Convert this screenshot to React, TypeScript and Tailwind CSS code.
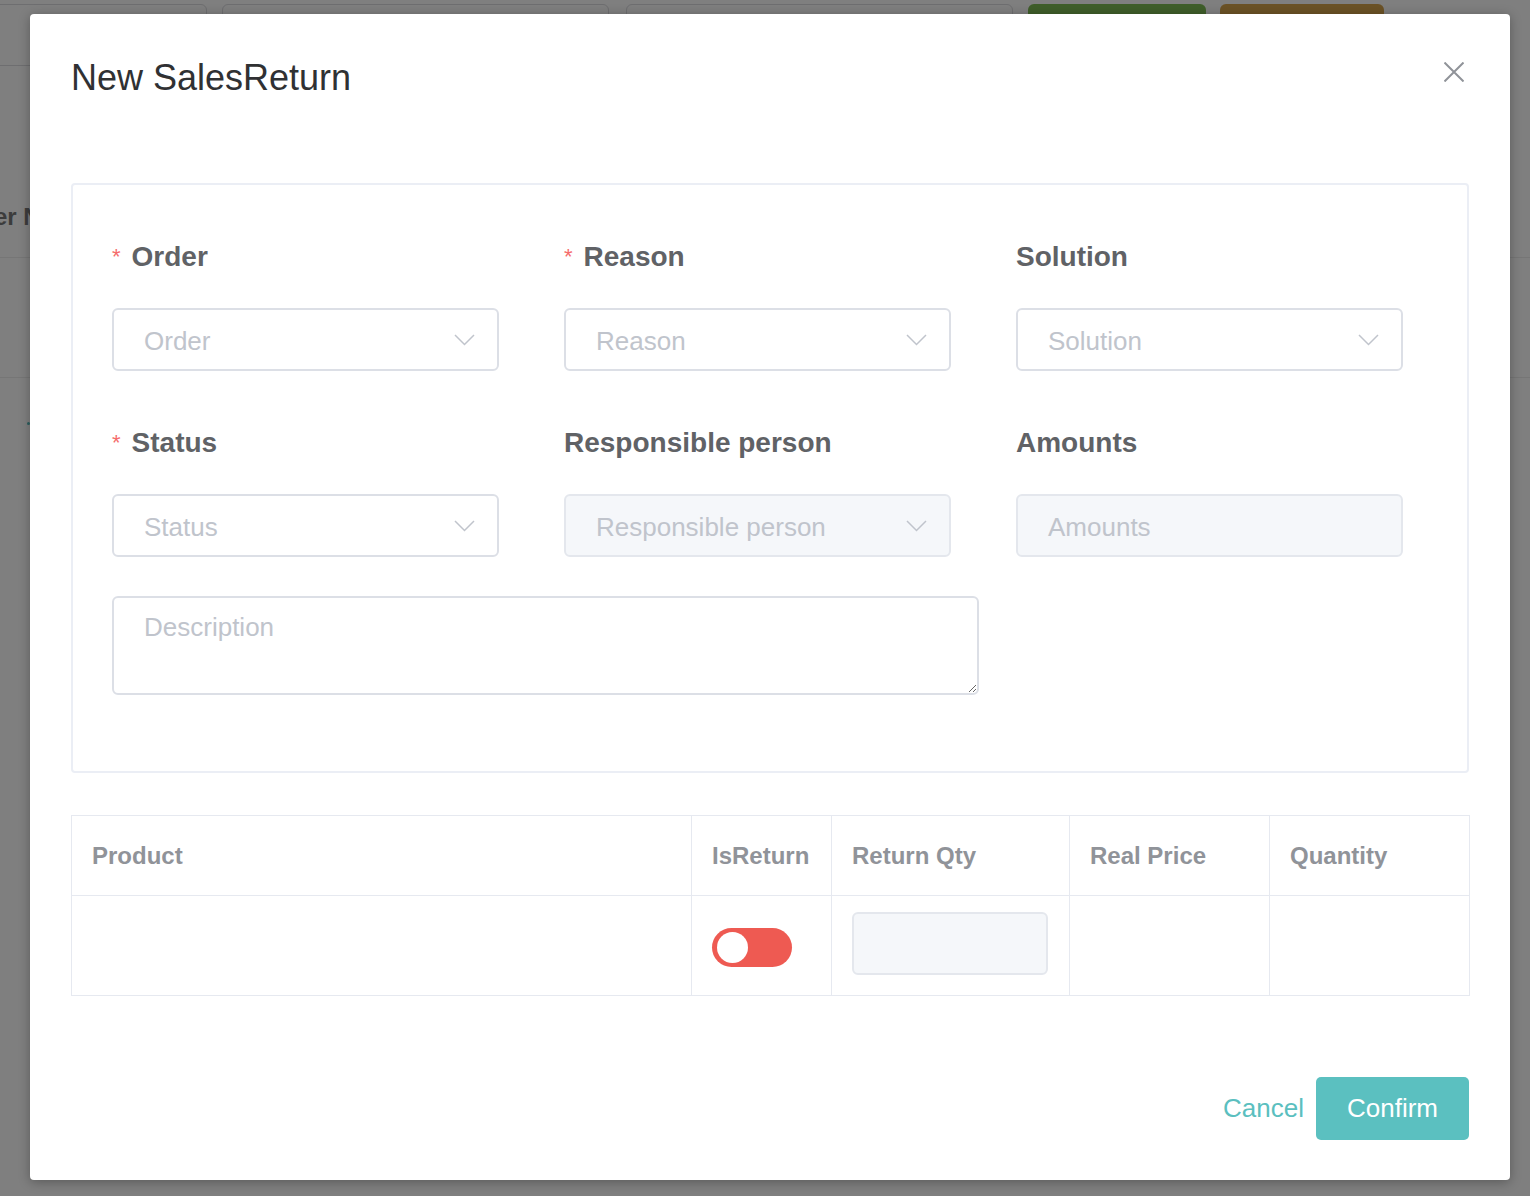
import React from "react";

// dimmed page behind the dialog + the "New SalesReturn" dialog itself
const font = { fontFamily: '"Liberation Sans", Arial, sans-serif' };

type LabelProps = { text: string; required?: boolean };

const FieldLabel: React.FC<LabelProps> = ({ text, required }) => (
  <div className="flex h-10 items-center text-[28px] font-bold leading-none text-[#606266]">
    {required && <span className="mr-[11px] text-[22px] font-normal text-[#f56c6c]">*</span>}
    {text}
  </div>
);

const Chevron = () => (
  <svg width="21" height="12" viewBox="0 0 21 12" fill="none">
    <path d="M1 1l9.5 9.5L20 1" stroke="#c0c4cc" strokeWidth="1.5" />
  </svg>
);

type BoxProps = { placeholder: string; disabled?: boolean; select?: boolean };

const FieldBox: React.FC<BoxProps> = ({ placeholder, disabled, select }) => (
  <div
    className={
      disabled
        ? "mt-[31px] flex h-[63px] items-center justify-between rounded-[6px] border-2 border-[#e4e7ed] bg-[#f5f7fa] pl-[30px] pr-[22px]"
        : "mt-[31px] flex h-[63px] items-center justify-between rounded-[6px] border-2 border-[#dcdfe6] bg-white pl-[30px] pr-[22px]"
    }
  >
    <span className="pt-[3px] text-[26px] text-[#c0c4cc]">{placeholder}</span>
    {select && <Chevron />}
  </div>
);

const App: React.FC = () => {
  const fields = [
    { label: "Order", required: true, select: true },
    { label: "Reason", required: true, select: true },
    { label: "Solution", select: true },
    { label: "Status", required: true, select: true },
    { label: "Responsible person", select: true, disabled: true },
    { label: "Amounts", disabled: true },
  ];

  const columns = [
    { title: "Product", w: "w-[620px]" },
    { title: "IsReturn", w: "w-[140px]" },
    { title: "Return Qty", w: "w-[238px]" },
    { title: "Real Price", w: "w-[200px]" },
    { title: "Quantity", w: "w-[200px]" },
  ];

  return (
    <div className="relative h-[1196px] w-full overflow-hidden bg-[#7f7f7f]" style={font}>
      {/* page behind the overlay */}
      <div className="flex gap-[15px] pt-[4px]">
        <div className="-ml-[20px] h-[62px] w-[227px] rounded-[6px] border border-[#6e6e70]" />
        <div className="h-[62px] w-[387px] rounded-[6px] border border-[#6e6e70]" />
        <div className="ml-[2px] h-[62px] w-[387px] rounded-[6px] border border-[#6e6e70]" />
        <div className="h-[62px] w-[178px] rounded-[6px] bg-[#3f5e2a]" />
        <div className="-ml-[1px] h-[62px] w-[164px] rounded-[6px] bg-[#6b5226]" />
      </div>
      <div className="flex h-[192px] items-end border-b border-[#767676] pb-[24px]">
        <span className="-ml-[6px] text-[24px] font-bold leading-[32px] text-[#3c3c3c]">er No</span>
      </div>
      <div className="h-[120px] border-b border-[#767676]" />
      <div className="ml-[27px] mt-[44px] h-[3px] w-[3px] rounded-full bg-[#2d6060]" />

      {/* dialog */}
      <div className="absolute left-[30px] top-[14px] flex h-[1166px] w-[1480px] flex-col rounded-[4px] bg-white px-[41px] shadow-[0_2px_12px_rgba(0,0,0,0.3)]">
        <div className="relative pt-[42px]">
          <h1 className="text-[36px] leading-[44px] text-[#303133]">New SalesReturn</h1>
          <button className="absolute right-[5px] top-[48px]">
            <svg width="20" height="20" viewBox="0 0 20 20" fill="none">
              <path d="M0.5 0.5l19 19M19.5 0.5l-19 19" stroke="#909399" strokeWidth="2" />
            </svg>
          </button>
        </div>

        <div className="mt-[83px] rounded-[4px] border-2 border-[#ebeef5] px-[39px] pb-[76px] pt-[52px]">
          <div className="grid grid-cols-[387px_387px_387px] gap-x-[65px] gap-y-[52px]">
            {fields.map((f) => (
              <div key={f.label}>
                <FieldLabel text={f.label} required={f.required} />
                <FieldBox placeholder={f.label} select={f.select} disabled={f.disabled} />
              </div>
            ))}
          </div>
          <textarea
            placeholder="Description"
            className="mt-[39px] block h-[99px] w-[867px] rounded-[6px] border-2 border-[#dcdfe6] px-[30px] py-[11px] text-[26px] leading-[36px] text-[#606266] outline-none placeholder:text-[#c0c4cc]"
          />
        </div>

        <table className="mt-[42px] w-[1398px] table-fixed border-collapse border border-[#e6e9f0]">
          <thead>
            <tr className="h-[80px]">
              {columns.map((c) => (
                <th
                  key={c.title}
                  className={`${c.w} border border-[#e6e9f0] pl-[20px] text-left text-[24px] font-bold text-[#909399]`}
                >
                  {c.title}
                </th>
              ))}
            </tr>
          </thead>
          <tbody>
            <tr className="h-[100px]">
              <td className="border border-[#e6e9f0]" />
              <td className="border border-[#e6e9f0] pl-[20px]">
                <div className="mt-[4px] flex h-[39px] w-[80px] items-center rounded-full bg-[#ee5a52] pl-[5px]">
                  <div className="h-[31px] w-[31px] rounded-full bg-white" />
                </div>
              </td>
              <td className="border border-[#e6e9f0] pl-[20px]">
                <div className="-mt-[4px] h-[63px] w-[196px] rounded-[6px] border-2 border-[#e4e7ed] bg-[#f5f7fa]" />
              </td>
              <td className="border border-[#e6e9f0]" />
              <td className="border border-[#e6e9f0]" />
            </tr>
          </tbody>
        </table>

        <div className="mt-[81px] flex items-center justify-end gap-[12px]">
          <button className="text-[26px] text-[#5bbfbf]">Cancel</button>
          <button className="h-[63px] w-[153px] rounded-[5px] bg-[#5bc0c0] text-[26px] text-white">Confirm</button>
        </div>
      </div>
    </div>
  );
};

export default App;
